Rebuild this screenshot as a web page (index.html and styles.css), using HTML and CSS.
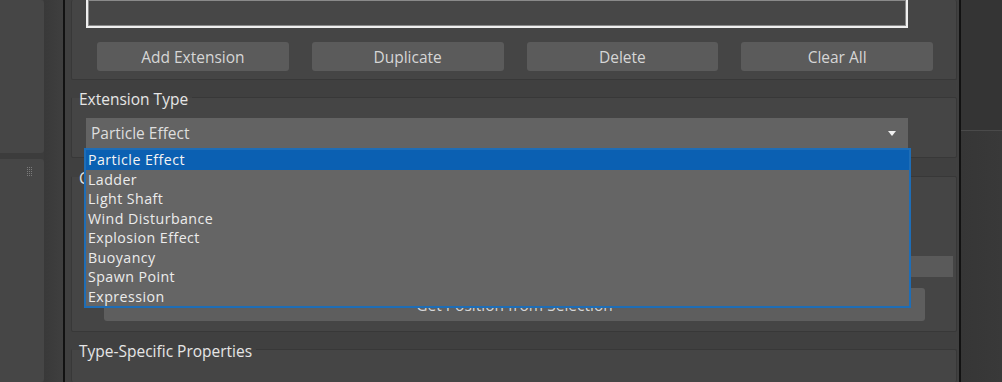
FILE: index.html
```html
<!DOCTYPE html>
<html lang="en">
<head>
  <meta charset="UTF-8" />
  <title>Extensions</title>
  <link rel="stylesheet" href="styles.css">
</head>
<body>
  <div class="side-left">
    <div class="dock top-dock"></div>
    <div class="dock bottom-dock">
      <svg class="grip" width="6" height="9" viewBox="0 0 6 9">
        <g fill="#7a7a7a">
          <rect x="0" y="0" width="1" height="1"/><rect x="2" y="0" width="1" height="1"/><rect x="4" y="0" width="1" height="1"/>
          <rect x="0" y="2" width="1" height="1"/><rect x="2" y="2" width="1" height="1"/><rect x="4" y="2" width="1" height="1"/>
          <rect x="0" y="4" width="1" height="1"/><rect x="2" y="4" width="1" height="1"/><rect x="4" y="4" width="1" height="1"/>
          <rect x="0" y="6" width="1" height="1"/><rect x="2" y="6" width="1" height="1"/><rect x="4" y="6" width="1" height="1"/>
          <rect x="0" y="8" width="1" height="1"/><rect x="2" y="8" width="1" height="1"/><rect x="4" y="8" width="1" height="1"/>
        </g>
      </svg>
    </div>
  </div>
  <div class="gutter"></div>
  <div class="vline"></div>

  <div class="main">
    <!-- extension list -->
    <div class="group list-group">
      <div class="listbox"></div>
      <div class="button-row">
        <button class="btn">Add Extension</button>
        <button class="btn">Duplicate</button>
        <button class="btn">Delete</button>
        <button class="btn">Clear All</button>
      </div>
    </div>

    <div class="group type-group">
      <div class="group-title"><span>Extension Type</span></div>
      <div class="combo">
        <span class="combo-text">Particle Effect</span>
        <span class="combo-arrow"></span>
        <ul class="popup">
          <li class="selected">Particle Effect</li>
          <li>Ladder</li>
          <li>Light Shaft</li>
          <li>Wind Disturbance</li>
          <li>Explosion Effect</li>
          <li>Buoyancy</li>
          <li>Spawn Point</li>
          <li>Expression</li>
        </ul>
      </div>
    </div>

    <div class="group common-group">
      <div class="group-title"><span>Common Properties</span></div>
      <div class="field-row">
        <div class="field"></div>
      </div>
      <button class="btn wide-btn">Get Position from Selection</button>
    </div>

    <div class="group props-group">
      <div class="group-title"><span>Type-Specific Properties</span></div>
    </div>
  </div>

  <div class="vline"></div>
  <div class="side-right">
    <div class="right-top"></div>
    <div class="right-bottom"></div>
  </div>
</body>
</html>
```

FILE: styles.css
```css
body {
  margin: 0;
  width: 1002px;
  height: 382px;
  overflow: hidden;
  display: flex;
  background: #3c3c3c;
  font-family: 'Open Sans', sans-serif;
  font-size: 15.5px;
  color: #dcdcdc;
}

/* left dock */
.side-left {
  width: 44px;
  display: flex;
  flex-direction: column;
  gap: 6px;
}

.dock {
  background: #464646;
  border-radius: 0 3px 3px 0;
}

.top-dock {
  height: 153px;
}

.bottom-dock {
  flex: 1;
}

.grip {
  display: block;
  margin: 8px 0 0 27px;
}

.gutter {
  width: 19px;
  background: linear-gradient(to right, #393939, #3f3f3f);
}

.vline {
  width: 2px;
  background: #121212;
}

/* main column */
.main {
  width: 886px;
  padding: 0 2px 0 6px;
  background: #404040;
  display: flex;
  flex-direction: column;
}

.group {
  background: #454545;
  border: 1px solid #383838;
  border-radius: 2px;
  display: flex;
  flex-direction: column;
}

.group-title {
  height: 18px;
  margin-top: -8px;
  display: flex;
  align-items: center;
  line-height: 18px;
  color: #e6e6e6;
}

.group-title span {
  padding: 0 4px 0 7px;
  background: linear-gradient(#404040 8px, #454545 8px);
}

.list-group {
  height: 79px;
  border-top: none;
}

.listbox {
  height: 26px;
  margin: 0 48px 0 14px;
  background: #474747;
  border: 2px solid #efefef;
  border-top: none;
  box-shadow: inset 0 0 0 1px #8a8a8a;
}

.button-row {
  margin: 14px 23px 0 25px;
  display: grid;
  grid-template-columns: repeat(4, 1fr);
  gap: 23px;
}

.btn {
  height: 29px;
  background: #5b5b5b;
  border: none;
  border-radius: 3px;
  font-family: 'Open Sans', sans-serif;
  font-size: 15.5px;
  color: #d6d6d6;
  padding: 0;
}

.type-group {
  margin-top: 17px;
  height: 59px;
}

.combo {
  position: relative;
  height: 30px;
  margin: 10px 48px 0 14px;
  background: #636363;
  display: flex;
  align-items: center;
  padding: 0 12px 0 5px;
}

.combo-text {
  flex: 1;
  color: #dedede;
}

.combo-arrow {
  width: 0;
  height: 0;
  border-left: 4px solid transparent;
  border-right: 4px solid transparent;
  border-top: 5px solid #f0f0f0;
}

/* open drop-down list */
.popup {
  position: absolute;
  top: 100%;
  left: -2px;
  width: 823px;
  margin: 0;
  padding: 0;
  list-style: none;
  background: #656565;
  border: 2px solid #1e6db6;
  z-index: 2;
  font-size: 14.2px;
  letter-spacing: 0.45px;
}

.popup li {
  height: 19.5px;
  line-height: 19.5px;
  padding-left: 2px;
  color: #ececec;
}

.popup .selected {
  background: #0b60b2;
  color: #f4f4f4;
}

.common-group {
  margin-top: 18px;
  height: 154px;
}

.field-row {
  margin: 69px 3px 0 150px;
  display: flex;
}

.field {
  flex: 1;
  height: 21px;
  background: #5a5a5a;
}

.wide-btn {
  height: 33px;
  margin: 11px 31px 0 32px;
  background: #5e5e5e;
}

.props-group {
  margin-top: 17px;
  flex: 1;
  border-bottom: none;
}

/* right dock */
.side-right {
  width: 41px;
  display: flex;
  flex-direction: column;
}

.right-top {
  height: 130px;
  background: #343434;
  border-bottom: 1px solid #4a4a4a;
}

.right-bottom {
  flex: 1;
  background: linear-gradient(to right, #363636, #393939);
}
```
